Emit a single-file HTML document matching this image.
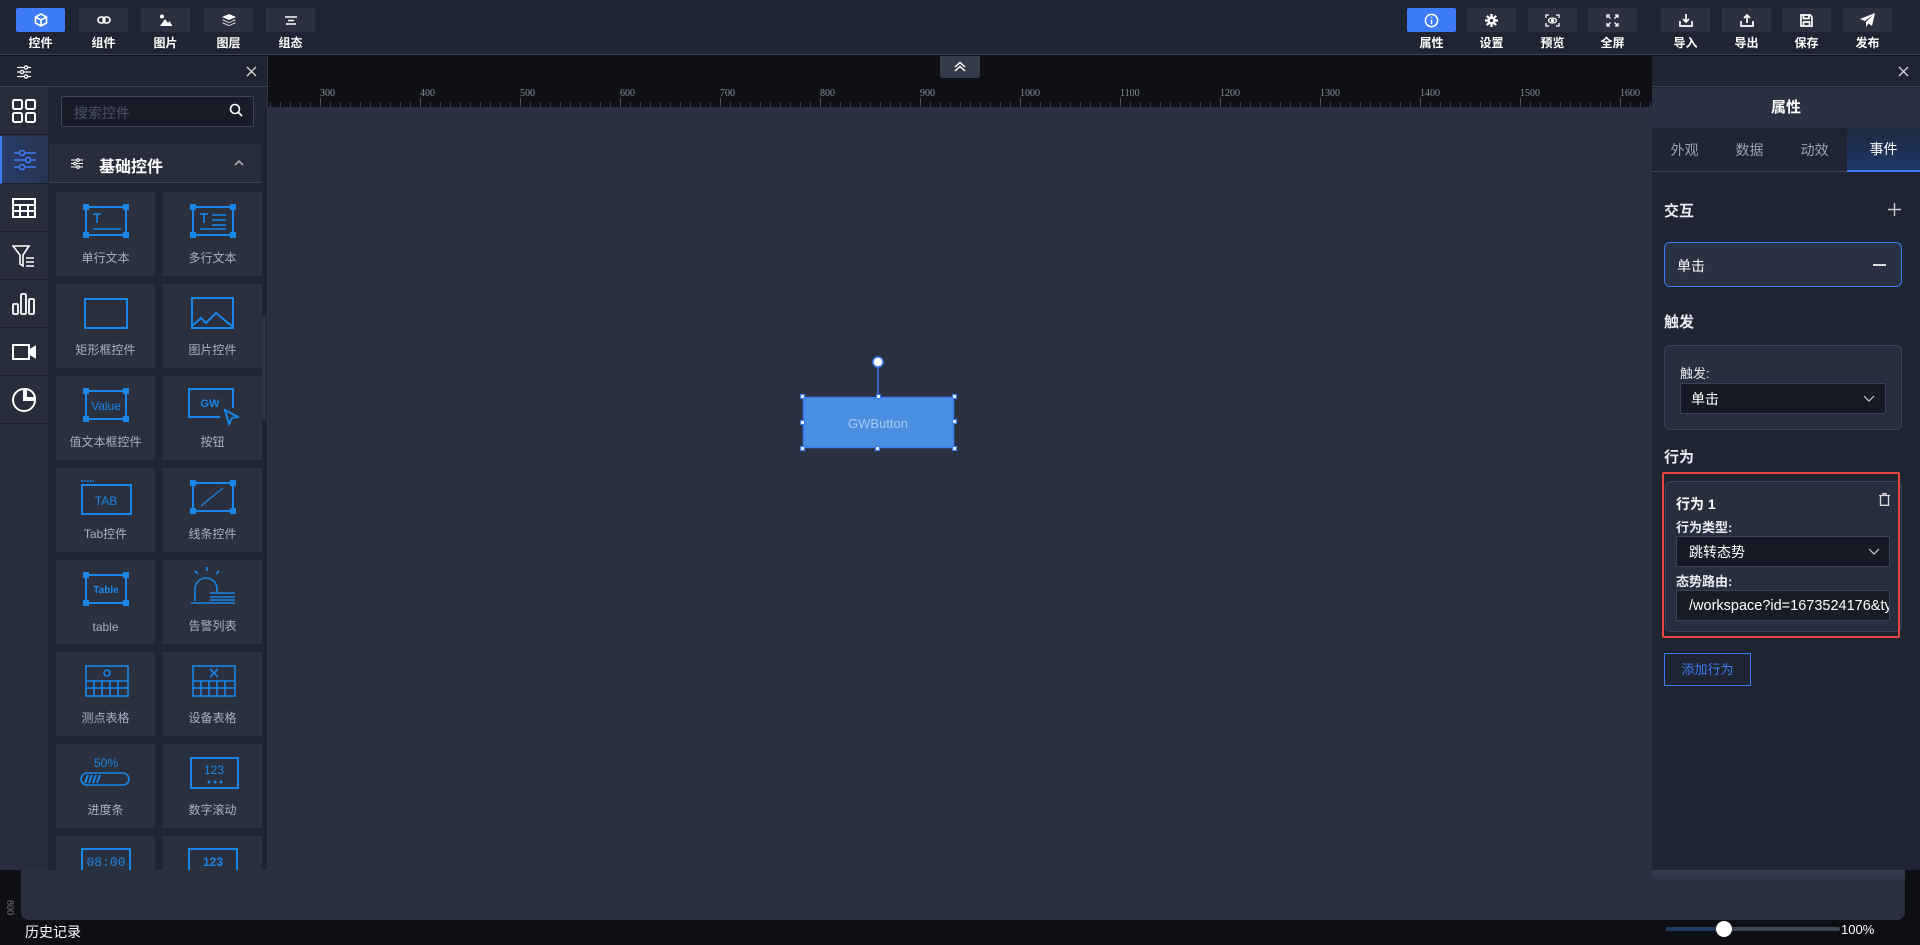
<!DOCTYPE html>
<html><head><meta charset="utf-8"><style>
*{box-sizing:border-box;margin:0;padding:0}
body{width:1920px;height:945px;overflow:hidden;background:#0d0f14;font-family:"Liberation Sans","Noto Sans CJK SC",sans-serif;position:relative;color:#fff}
.abs{position:absolute}
.top{left:0;top:0;width:1920px;height:55px;background:#1f2432;border-bottom:1px solid #3a4458}
.tb{position:absolute;top:8px;width:49px;height:24px;background:#2b3140;border-radius:2px;display:flex;align-items:center;justify-content:center}
.tb.on{background:#3d7cf5}
.tl{position:absolute;top:34px;width:49px;text-align:center;font-size:12px;font-weight:bold;color:#fff}
.lp{left:0;top:56px;width:268px;height:814px;background:#1f2432;border-right:1px solid #2e3646}
.side{left:0;top:87px;width:48px;height:783px;background:#272d3a}
.si{position:absolute;left:0;width:48px;height:48px;border-bottom:1px solid #1a1e28;display:flex;align-items:center;justify-content:center}
.card{position:absolute;width:99px;height:84px;background:#2a303e}
.card .lab{position:absolute;bottom:10px;width:100%;text-align:center;font-size:12px;color:#a7b1c2}
.card svg{position:absolute;left:50%;top:12px;transform:translateX(-50%)}
.rp{left:1652px;top:56px;width:268px;height:814px;background:#1f2432}
.h{font-size:15px;font-weight:bold;color:#e8ecf2}
.sel{position:absolute;background:#151a25;border:1px solid #394257;font-size:14px;color:#fff;padding-left:10px;display:flex;align-items:center}
</style></head><body>
<div class="abs top">
 <div class="tb on" style="left:16px"><svg width="14" height="14" viewBox="0 0 14 14" fill="none" stroke="#fff" stroke-width="1.6"><path d="M7 1L12.5 4V10L7 13L1.5 10V4Z M1.5 4L7 7L12.5 4 M7 7V13"/></svg></div><div class="tl" style="left:16px">控件</div>
 <div class="tb" style="left:79px"><svg width="14" height="10" viewBox="0 0 14 10" fill="none" stroke="#fff" stroke-width="1.6"><rect x="1" y="2" width="7" height="6" rx="3"/><rect x="6" y="2" width="7" height="6" rx="3"/></svg></div><div class="tl" style="left:79px">组件</div>
 <div class="tb" style="left:141px"><svg width="14" height="12" viewBox="0 0 14 12" fill="#fff"><circle cx="3" cy="2.5" r="2"/><path d="M1 12L6 5L9 9L10.5 7L13.5 12Z"/></svg></div><div class="tl" style="left:141px">图片</div>
 <div class="tb" style="left:204px"><svg width="14" height="12" viewBox="0 0 14 12" fill="#fff"><path d="M7 0L14 3L7 6L0 3Z"/><path d="M1 5.5L7 8.2L13 5.5L14 6L7 9L0 6Z"/><path d="M1 8.5L7 11.2L13 8.5L14 9L7 12L0 9Z"/></svg></div><div class="tl" style="left:204px">图层</div>
 <div class="tb" style="left:266px"><svg width="12" height="9" viewBox="0 0 12 9" stroke="#fff" stroke-width="1.4"><path d="M0 1H12M3 4.5H9M1 8H11"/></svg></div><div class="tl" style="left:266px">组态</div>

 <div class="tb on" style="left:1407px"><svg width="15" height="15" viewBox="0 0 16 16" fill="none" stroke="#fff" stroke-width="1.6"><circle cx="8" cy="8" r="6.5"/><path d="M8 7V12M8 4V5"/></svg></div><div class="tl" style="left:1407px">属性</div>
 <div class="tb" style="left:1467px"><svg width="13" height="13" viewBox="0 0 14 14" fill="#fff"><circle cx="7" cy="7" r="4.5"/><g stroke="#fff" stroke-width="2.4"><path d="M7 0V14M0 7H14M2 2L12 12M12 2L2 12"/></g><circle cx="7" cy="7" r="1.8" fill="#2b3140"/></svg></div><div class="tl" style="left:1467px">设置</div>
 <div class="tb" style="left:1528px"><svg width="15" height="13" viewBox="0 0 15 13" fill="none" stroke="#fff" stroke-width="1.3"><path d="M1 4V1H4M11 1H14V4M1 9V12H4M11 12H14V9"/><ellipse cx="7.5" cy="6.5" rx="4" ry="2.5"/><circle cx="7.5" cy="6.5" r="1" fill="#fff"/></svg></div><div class="tl" style="left:1528px">预览</div>
 <div class="tb" style="left:1588px"><svg width="13" height="13" viewBox="0 0 13 13" fill="none" stroke="#fff" stroke-width="1.3"><path d="M1 4V1H4M9 1H12V4M1 9V12H4M9 12H12V9M2 2L4.5 4.5M11 2L8.5 4.5M2 11L4.5 8.5M11 11L8.5 8.5"/></svg></div><div class="tl" style="left:1588px">全屏</div>
 <div class="tb" style="left:1661px"><svg width="14" height="13" viewBox="0 0 14 13" fill="none" stroke="#fff" stroke-width="1.7"><path d="M1 7V12H13V7M7 0V8M4 5L7 8L10 5"/></svg></div><div class="tl" style="left:1661px">导入</div>
 <div class="tb" style="left:1722px"><svg width="14" height="13" viewBox="0 0 14 13" fill="none" stroke="#fff" stroke-width="1.7"><path d="M1 7V12H13V7M7 9V1M4 4L7 1L10 4"/></svg></div><div class="tl" style="left:1722px">导出</div>
 <div class="tb" style="left:1782px"><svg width="13" height="13" viewBox="0 0 13 13" fill="none" stroke="#fff" stroke-width="1.7"><path d="M1 1H10L12 3V12H1Z M3.5 1V4.5H9V1 M3.5 12V8H9.5V12"/></svg></div><div class="tl" style="left:1782px">保存</div>
 <div class="tb" style="left:1843px"><svg width="15" height="14" viewBox="0 0 15 14" fill="#fff"><path d="M15 0L0 6L5 8L13 2L6 9V14L8.5 10.5L12 13Z"/></svg></div><div class="tl" style="left:1843px">发布</div>
</div>

<div class="abs" style="left:268px;top:56px;width:1384px;height:51px;background:#0e1016"></div>
<svg class="abs" style="left:268px;top:56px" width="1384" height="51">
 <defs><pattern id="tk" x="2" y="0" width="10" height="51" patternUnits="userSpaceOnUse"><rect x="0" y="46" width="1" height="5" fill="#333843"/></pattern></defs>
 <rect width="1384" height="51" fill="url(#tk)"/>
 <g fill="#4a505c"><rect x="52" y="42" width="1" height="9"/><rect x="152" y="42" width="1" height="9"/><rect x="252" y="42" width="1" height="9"/><rect x="352" y="42" width="1" height="9"/><rect x="452" y="42" width="1" height="9"/><rect x="552" y="42" width="1" height="9"/><rect x="652" y="42" width="1" height="9"/><rect x="752" y="42" width="1" height="9"/><rect x="852" y="42" width="1" height="9"/><rect x="952" y="42" width="1" height="9"/><rect x="1052" y="42" width="1" height="9"/><rect x="1152" y="42" width="1" height="9"/><rect x="1252" y="42" width="1" height="9"/><rect x="1352" y="42" width="1" height="9"/></g>
 <g fill="#8a8f99" font-family="Liberation Serif" font-size="10"><text x="52" y="40">300</text><text x="152" y="40">400</text><text x="252" y="40">500</text><text x="352" y="40">600</text><text x="452" y="40">700</text><text x="552" y="40">800</text><text x="652" y="40">900</text><text x="752" y="40">1000</text><text x="852" y="40">1100</text><text x="952" y="40">1200</text><text x="1052" y="40">1300</text><text x="1152" y="40">1400</text><text x="1252" y="40">1500</text><text x="1352" y="40">1600</text></g>
</svg>
<div class="abs" style="left:940px;top:56px;width:40px;height:22px;background:#333a48;border-radius:0 0 3px 3px"><svg width="40" height="22"><path d="M15 11L20 6.5L25 11M15 15L20 10.5L25 15" fill="none" stroke="#fff" stroke-width="1.5"/></svg></div>

<div class="abs" style="left:268px;top:107px;width:1384px;height:763px;background:#2a3040"></div>
<svg class="abs" style="left:790px;top:350px" width="180" height="110">
 <line x1="88" y1="12" x2="88" y2="47" stroke="#3b7cf3" stroke-width="1.5"/>
 <circle cx="88" cy="12" r="5" fill="#fff" stroke="#3b7cf3" stroke-width="1.5"/>
 <rect x="13.5" y="47.5" width="150" height="50" rx="2" fill="#4a8fe0" stroke="#3b7cf3" stroke-width="1.5"/>
 <text x="88" y="78" text-anchor="middle" font-family="Liberation Sans" font-size="13" fill="#a9c9ef">GWButton</text>
 <g fill="#fff" stroke="#3b7cf3" stroke-width="1.2"><rect x="10.5" y="44.5" width="4" height="4"/><rect x="86.5" y="44.5" width="4" height="4"/><rect x="162.5" y="44.5" width="4" height="4"/><rect x="10.5" y="70.5" width="4" height="4"/><rect x="162.5" y="69.5" width="4" height="4"/><rect x="10.5" y="96.5" width="4" height="4"/><rect x="85.5" y="96.5" width="4" height="4"/><rect x="162.5" y="96.5" width="4" height="4"/></g>
</svg>

<div class="abs" style="left:21px;top:870px;width:1884px;height:50px;background:#2a3040;border-radius:0 0 8px 8px"></div>
<div class="abs" style="left:1652px;top:870px;width:253px;height:12px;background:linear-gradient(#353d50,#2a3040)"></div>
<div class="abs" style="left:0;top:870px;width:21px;height:75px;background:#0e1016"></div>
<div class="abs" style="left:2px;top:902px;font-size:10px;color:#777;transform:rotate(90deg);font-family:'Liberation Serif'">800</div>
<div class="abs" style="left:25px;top:922px;font-size:14px;color:#fff">历史记录</div>
<div class="abs" style="left:1666px;top:927px;width:174px;height:4px;background:#3e4759;border-radius:2px"></div>
<div class="abs" style="left:1666px;top:927px;width:58px;height:4px;background:#1e3a5c"></div>
<div class="abs" style="left:1716px;top:921px;width:16px;height:16px;background:#fff;border-radius:50%"></div>
<div class="abs" style="left:1841px;top:922px;font-size:13px;color:#fff">100%</div>

<div class="abs lp">
 <div class="abs" style="left:0;top:0;width:268px;height:31px;border-bottom:1px solid #3a4458"></div>
 <svg class="abs" style="left:17px;top:9px" width="14" height="14" fill="none" stroke="#fff" stroke-width="1.3"><path d="M0 2.5H14M0 7H14M0 11.5H14"/><circle cx="9" cy="2.5" r="1.6" fill="#1f2432"/><circle cx="5" cy="7" r="1.6" fill="#1f2432"/><circle cx="9" cy="11.5" r="1.6" fill="#1f2432"/></svg>
 <svg class="abs" style="left:246px;top:10px" width="11" height="11" stroke="#ddd" stroke-width="1.3"><path d="M1 1L10 10M10 1L1 10"/></svg>
</div>
<div class="abs side">
 <div class="si" style="top:0"><svg width="24" height="24" fill="none" stroke="#fff" stroke-width="2"><rect x="1" y="1" width="9" height="9" rx="1.5"/><rect x="14" y="1" width="9" height="9" rx="1.5"/><rect x="1" y="14" width="9" height="9" rx="1.5"/><rect x="14" y="14" width="9" height="9" rx="1.5"/></svg></div>
 <div class="si" style="top:49px;background:linear-gradient(90deg,#2a3e6a,#273350);border-left:2px solid #3d7cf5"><svg width="22" height="22" fill="none" stroke="#3d7cf5" stroke-width="1.6"><path d="M0 4H22M0 11H22M0 18H22"/><circle cx="8" cy="4" r="2.5" fill="#273350"/><circle cx="14" cy="11" r="2.5" fill="#273350"/><circle cx="8" cy="18" r="2.5" fill="#273350"/></svg></div>
 <div class="si" style="top:97px"><svg width="24" height="20" fill="none" stroke="#fff" stroke-width="2"><rect x="1" y="1" width="22" height="18"/><path d="M1 7H23M1 13H23M8 7V19M16 7V19"/></svg></div>
 <div class="si" style="top:145px"><svg width="24" height="24" fill="none" stroke="#fff" stroke-width="1.6"><path d="M1 2H17L11 11V22L8 20V11Z M14 14H22M14 18H22M14 22H22"/></svg></div>
 <div class="si" style="top:193px"><svg width="24" height="22" fill="none" stroke="#fff" stroke-width="1.8"><rect x="1" y="11" width="5" height="10" rx="1"/><rect x="9" y="1" width="5" height="20" rx="1"/><rect x="17" y="6" width="5" height="15" rx="1"/></svg></div>
 <div class="si" style="top:241px"><svg width="24" height="18" fill="none" stroke="#fff" stroke-width="2"><rect x="1" y="2" width="16" height="14"/><path d="M18 7L23 4V14L18 11Z" fill="#fff"/></svg></div>
 <div class="si" style="top:289px"><svg width="24" height="24" fill="none" stroke="#fff" stroke-width="2"><path d="M12 1A11 11 0 1 0 23 12H12Z"/><path d="M14 1A10 10 0 0 1 23 10H14Z"/></svg></div>
</div>
<div class="abs" style="left:61px;top:96px;width:193px;height:31px;border:1px solid #3a4458;background:#171c27;border-radius:2px;font-size:14px;color:#4a5264;padding:6px 0 0 12px">搜索控件</div>
<svg class="abs" style="left:229px;top:103px" width="14" height="14" fill="none" stroke="#fff" stroke-width="1.6"><circle cx="6" cy="6" r="4.5"/><path d="M9.5 9.5L13 13"/></svg>
<div class="abs" style="left:49px;top:144px;width:212px;height:39px;background:#272d3a;border-bottom:1px solid #3a4458"></div>
<svg class="abs" style="left:71px;top:158px" width="12" height="11" fill="none" stroke="#fff" stroke-width="1.1"><path d="M0 2H12M0 5.5H12M0 9H12"/><circle cx="7" cy="2" r="1.3" fill="#272d3a"/><circle cx="4" cy="5.5" r="1.3" fill="#272d3a"/><circle cx="7" cy="9" r="1.3" fill="#272d3a"/></svg>
<div class="abs" style="left:99px;top:153px;font-size:16px;font-weight:bold;color:#fff">基础控件</div>
<svg class="abs" style="left:234px;top:160px" width="10" height="6"><path d="M1 5L5 1L9 5" fill="none" stroke="#aaa" stroke-width="1.6"/></svg>
<div class="abs" style="left:262px;top:316px;width:4px;height:104px;background:#2e3444;border-radius:2px"></div>

<div class="card" style="left:56px;top:192px"><svg width="46" height="34" fill="none" stroke="#1a86e8" stroke-width="2"><rect x="3" y="3" width="40" height="28"/><g fill="#1a86e8" stroke="none"><rect x="0" y="0" width="6" height="6"/><rect x="40" y="0" width="6" height="6"/><rect x="0" y="28" width="6" height="6"/><rect x="40" y="28" width="6" height="6"/></g><path d="M10 10H18M14 10V19M10 25H38" stroke-width="1.6"/></svg><div class="lab">单行文本</div></div>
<div class="card" style="left:163px;top:192px"><svg width="46" height="34" fill="none" stroke="#1a86e8" stroke-width="2"><rect x="3" y="3" width="40" height="28"/><g fill="#1a86e8" stroke="none"><rect x="0" y="0" width="6" height="6"/><rect x="40" y="0" width="6" height="6"/><rect x="0" y="28" width="6" height="6"/><rect x="40" y="28" width="6" height="6"/></g><path d="M10 10H18M14 10V19M22 11H36M22 16H36M22 21H36M10 25H36" stroke-width="1.6"/></svg><div class="lab">多行文本</div></div>
<div class="card" style="left:56px;top:284px"><svg width="46" height="34" fill="none" stroke="#1a86e8" stroke-width="2"><rect x="2" y="3" width="42" height="29"/></svg><div class="lab">矩形框控件</div></div>
<div class="card" style="left:163px;top:284px"><svg width="46" height="34" fill="none" stroke="#1a86e8" stroke-width="2"><rect x="2" y="2" width="41" height="30"/><path d="M2 30L11 22L16 27L26 17L43 31"/></svg><div class="lab">图片控件</div></div>
<div class="card" style="left:56px;top:376px"><svg width="46" height="34" fill="none" stroke="#1a86e8" stroke-width="2"><rect x="3" y="3" width="40" height="28"/><g fill="#1a86e8" stroke="none"><rect x="0" y="0" width="6" height="6"/><rect x="40" y="0" width="6" height="6"/><rect x="0" y="28" width="6" height="6"/><rect x="40" y="28" width="6" height="6"/></g><text x="23" y="22" text-anchor="middle" font-family="Liberation Sans" font-size="12" fill="#1a86e8" stroke="none">Value</text></svg><div class="lab">值文本框控件</div></div>
<div class="card" style="left:163px;top:376px"><svg width="52" height="38" fill="none" stroke="#1a86e8" stroke-width="2"><path d="M46 20V1H2V29H33"/><path d="M38 22L51 29L45 30L42 36Z"/><text x="23" y="19" text-anchor="middle" font-family="Liberation Sans" font-size="11" fill="#1a86e8" stroke="none" font-weight="bold">GW</text></svg><div class="lab">按钮</div></div>
<div class="card" style="left:56px;top:468px"><svg width="52" height="36" fill="none" stroke="#1a86e8" stroke-width="2"><path d="M1 1H14" stroke-width="1.4" stroke-dasharray="2 1"/><rect x="2" y="5" width="49" height="29"/><text x="26" y="25" text-anchor="middle" font-family="Liberation Sans" font-size="12" fill="#1a86e8" stroke="none">TAB</text></svg><div class="lab">Tab控件</div></div>
<div class="card" style="left:163px;top:468px"><svg width="46" height="34" fill="none" stroke="#1a86e8" stroke-width="2"><rect x="3" y="3" width="40" height="28"/><g fill="#1a86e8" stroke="none"><rect x="0" y="0" width="6" height="6"/><rect x="40" y="0" width="6" height="6"/><rect x="0" y="28" width="6" height="6"/><rect x="40" y="28" width="6" height="6"/></g><path d="M11 26L33 8" stroke-width="1.2"/></svg><div class="lab">线条控件</div></div>
<div class="card" style="left:56px;top:560px"><svg width="46" height="34" fill="none" stroke="#1a86e8" stroke-width="2"><rect x="3" y="3" width="40" height="28"/><g fill="#1a86e8" stroke="none"><rect x="0" y="0" width="6" height="6"/><rect x="40" y="0" width="6" height="6"/><rect x="0" y="28" width="6" height="6"/><rect x="40" y="28" width="6" height="6"/></g><text x="23" y="21" text-anchor="middle" font-family="Liberation Sans" font-size="10" font-weight="bold" fill="#1a86e8" stroke="none">Table</text></svg><div class="lab">table</div></div>
<div class="card" style="left:163px;top:560px"><svg width="46" height="40" fill="none" stroke="#1a86e8" stroke-width="1.6" style="top:6px"><path d="M5 35V23A11 11 0 0 1 27 23V27M17 1V5M5 5L8 8M29 5L26 8M1 37H45M20 27H45M20 31H45M20 34H45"/></svg><div class="lab">告警列表</div></div>
<div class="card" style="left:56px;top:652px"><svg width="46" height="34" fill="none" stroke="#1a86e8" stroke-width="1.6"><rect x="3" y="2" width="42" height="30"/><path d="M3 17H45M3 24H45M11 17V32M19 17V32M27 17V32M35 17V32"/><circle cx="24" cy="9" r="3"/></svg><div class="lab">测点表格</div></div>
<div class="card" style="left:163px;top:652px"><svg width="46" height="34" fill="none" stroke="#1a86e8" stroke-width="1.6"><rect x="3" y="2" width="42" height="30"/><path d="M3 17H45M3 24H45M11 17V32M19 17V32M27 17V32M35 17V32M20 5L28 13M28 5L20 13"/></svg><div class="lab">设备表格</div></div>
<div class="card" style="left:56px;top:744px"><svg width="52" height="34" fill="none" stroke="#1a86e8" stroke-width="1.6"><text x="26" y="11" text-anchor="middle" font-family="Liberation Sans" font-size="12" fill="#1a86e8" stroke="none">50%</text><rect x="1" y="17" width="48" height="12" rx="6"/><path d="M5 27L8 19M9 27L12 19M13 27L16 19M17 27L20 19" stroke-width="2"/></svg><div class="lab">进度条</div></div>
<div class="card" style="left:163px;top:744px"><svg width="52" height="34" fill="none" stroke="#1a86e8" stroke-width="2"><rect x="4" y="2" width="47" height="30"/><text x="27" y="18" text-anchor="middle" font-family="Liberation Sans" font-size="12" fill="#1a86e8" stroke="none">123</text><g fill="#1a86e8" stroke="none"><circle cx="22" cy="26" r="1.5"/><circle cx="28" cy="26" r="1.5"/><circle cx="34" cy="26" r="1.5"/></g></svg><div class="lab">数字滚动</div></div>
<div class="abs" style="left:56px;top:836px;width:99px;height:34px;background:#2a303e;overflow:hidden"><svg style="position:absolute;left:24px;top:12px" width="52" height="30" fill="none" stroke="#1a86e8" stroke-width="2"><rect x="2" y="1" width="48" height="28"/><text x="26" y="18" text-anchor="middle" font-family="Liberation Mono" font-size="13" fill="#1a86e8" stroke="none">08:00</text></svg></div>
<div class="abs" style="left:163px;top:836px;width:99px;height:34px;background:#2a303e;overflow:hidden"><svg style="position:absolute;left:24px;top:12px" width="52" height="30" fill="none" stroke="#1a86e8" stroke-width="2"><rect x="2" y="1" width="48" height="28"/><text x="26" y="18" text-anchor="middle" font-family="Liberation Sans" font-weight="bold" font-size="12" fill="#1a86e8" stroke="none">123</text></svg></div>

<div class="abs rp">
 <div class="abs" style="left:0;top:0;width:268px;height:31px;border-bottom:1px solid #3a4458"></div>
 <svg class="abs" style="left:246px;top:10px" width="11" height="11" stroke="#ddd" stroke-width="1.3"><path d="M1 1L10 10M10 1L1 10"/></svg>
 <div class="abs" style="left:0;top:32px;width:268px;height:40px;background:#2a3142;text-align:center;font-size:15px;font-weight:bold;line-height:40px">属性</div>
 <div class="abs" style="left:0;top:72px;width:268px;height:44px;border-bottom:1px solid #3a4458;font-size:14px;color:#9aa3b2">
  <div class="abs" style="left:0;width:65px;text-align:center;line-height:44px">外观</div>
  <div class="abs" style="left:65px;width:65px;text-align:center;line-height:44px">数据</div>
  <div class="abs" style="left:130px;width:65px;text-align:center;line-height:44px">动效</div>
  <div class="abs" style="left:195px;width:73px;height:44px;text-align:center;line-height:42px;color:#fff;background:linear-gradient(#1f2a40,#1e3766);border-bottom:2px solid #3d7cf5">事件</div>
 </div>
</div>
<div class="abs h" style="left:1664px;top:200px">交互</div>
<svg class="abs" style="left:1888px;top:203px" width="13" height="13" stroke="#ccc" stroke-width="1.4"><path d="M6.5 0V13M0 6.5H13"/></svg>
<div class="abs" style="left:1664px;top:242px;width:238px;height:45px;border:1px solid #3d7cf5;border-radius:6px;background:#2a3142"></div>
<div class="abs" style="left:1677px;top:256px;font-size:14px;color:#fff">单击</div>
<div class="abs" style="left:1873px;top:264px;width:13px;height:1.5px;background:#ddd"></div>
<div class="abs h" style="left:1664px;top:311px">触发</div>
<div class="abs" style="left:1664px;top:345px;width:238px;height:85px;border:1px solid #3a4458;border-radius:6px;background:#272e3d"></div>
<div class="abs" style="left:1680px;top:363px;font-size:13px;color:#e8ecf2">触发:</div>
<div class="sel" style="left:1680px;top:383px;width:206px;height:31px">单击</div>
<svg class="abs" style="left:1863px;top:395px" width="12" height="7"><path d="M1 1L6 6L11 1" fill="none" stroke="#ccc" stroke-width="1.2"/></svg>
<div class="abs h" style="left:1664px;top:446px">行为</div>
<div class="abs" style="left:1665px;top:481px;width:237px;height:151px;border:1px solid #3a4458;border-radius:6px;background:#272e3d"></div>
<div class="abs" style="left:1662px;top:472px;width:238px;height:166px;border:2px solid #e8453c;border-radius:2px"></div>
<div class="abs" style="left:1676px;top:494px;font-size:14px;font-weight:bold;color:#fff">行为 1</div>
<svg class="abs" style="left:1879px;top:493px" width="11" height="13" fill="none" stroke="#ddd" stroke-width="1.3"><path d="M0 2.5H11M4 2.5V0.7H7V2.5M1.5 2.5V12.3H9.5V2.5"/></svg>
<div class="abs" style="left:1676px;top:517px;font-size:13px;font-weight:bold;color:#e8ecf2">行为类型:</div>
<div class="sel" style="left:1676px;top:536px;width:214px;height:31px;padding-left:12px">跳转态势</div>
<svg class="abs" style="left:1868px;top:548px" width="12" height="7"><path d="M1 1L6 6L11 1" fill="none" stroke="#ccc" stroke-width="1.2"/></svg>
<div class="abs" style="left:1676px;top:571px;font-size:13px;font-weight:bold;color:#e8ecf2">态势路由:</div>
<div class="sel" style="left:1676px;top:590px;width:214px;height:31px;padding-left:12px;background:#181c24;overflow:hidden;white-space:nowrap;font-size:14.5px">/workspace?id=1673524176&amp;type</div>
<div class="abs" style="left:1664px;top:653px;width:87px;height:33px;border:1px solid #3d7cf5;font-size:13px;color:#3d7cf5;text-align:center;line-height:31px">添加行为</div>
</body></html>
